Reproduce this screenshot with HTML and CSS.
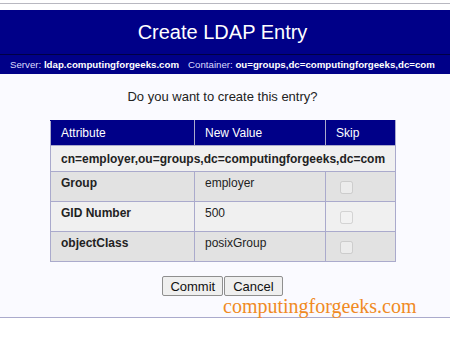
FILE: index.html
```html
<!DOCTYPE html>
<html>
<head>
<meta charset="utf-8">
<link rel="stylesheet" href="styles.css">
</head>
<body>
<div class="topline"></div>
<div class="page">
  <div class="title">Create LDAP Entry</div>
  <div class="subtitle">
    <span>Server: <b>ldap.computingforgeeks.com</b></span>
    <span>Container: <b>ou=groups,dc=computingforgeeks,dc=com</b></span>
  </div>
  <div class="content">
    <p class="question">Do you want to create this entry?</p>
    <table class="entry">
      <colgroup><col class="c1"><col class="c2"><col class="c3"></colgroup>
      <thead>
        <tr><th>Attribute</th><th>New Value</th><th>Skip</th></tr>
      </thead>
      <tbody>
        <tr class="dn"><td colspan="3">cn=employer,ou=groups,dc=computingforgeeks,dc=com</td></tr>
        <tr class="even"><td class="attr">Group</td><td>employer</td><td><input type="checkbox" disabled></td></tr>
        <tr class="odd"><td class="attr">GID Number</td><td>500</td><td><input type="checkbox" disabled></td></tr>
        <tr class="even"><td class="attr">objectClass</td><td>posixGroup</td><td><input type="checkbox" disabled></td></tr>
      </tbody>
    </table>
    <div class="buttons">
      <button>Commit</button><button>Cancel</button>
    </div>
    <div class="watermark">computingforgeeks.com</div>
  </div>
</div>
</body>
</html>
```

FILE: styles.css
```css
html, body {
  margin: 0;
  padding: 0;
  background: #ffffff;
}
body {
  font-family: "Liberation Sans", Arial, sans-serif;
  color: #222;
  padding-top: 3px;
}
.topline {
  height: 1px;
  background: #b8b8c0;
  margin-bottom: 6px;
}
.page {
  width: 450px;
}
.title {
  background: #000088;
  color: #ffffff;
  font-size: 20px;
  height: 44px;
  line-height: 44px;
  text-align: center;
  padding-right: 5px;
  border-bottom: 1px solid #000044;
}
.subtitle {
  background: #000088;
  color: #dcdcff;
  font-size: 9.7px;
  height: 19px;
  display: flex;
  align-items: center;
  gap: 9px;
  padding-left: 10px;
  white-space: nowrap;
}
.subtitle span { flex: none; }
.subtitle b {
  color: #ffffff;
}
.content {
  background: #fafaff;
  border-bottom: 1px solid #aaaacc;
  width: 450px;
  padding-top: 1px;
  height: 242px;
}
.question {
  width: 445px;
  text-align: center;
  font-size: 13px;
  margin: 14px 0 0 0;
  line-height: 15px;
}
.entry {
  border-collapse: collapse;
  margin: 16px 0 0 50px;
  width: 346px;
  font-size: 12px;
  border: 1px solid #aaaacc;
}
.entry .c1 { width: 144px; }
.entry .c2 { width: 131px; }
.entry th {
  background: #000088;
  color: #ffffff;
  font-weight: normal;
  text-align: left;
  height: 24px;
  padding: 0 10px;
  border: 1px solid #aaaacc;
  border-top: 1px solid #000088;
}
.entry td {
  border: 1px solid #aaaacc;
  padding: 4px 10px 0 10px;
  vertical-align: top;
  height: 25px;
}
.entry tr.dn td {
  background: #f0f0f0;
  font-weight: bold;
  height: 25px;
  padding: 0 10px;
  vertical-align: middle;
  white-space: nowrap;
}
.entry tr.even td { background: #e2e2e2; }
.entry tr.odd td { background: #f0f0f0; }
.entry td.attr { font-weight: bold; }
.entry input[type="checkbox"] {
  margin: 5px 0 0 4px;
  width: 13px;
  height: 13px;
  opacity: 0.8;
}
.buttons {
  width: 445px;
  display: flex;
  justify-content: center;
  margin-top: 14px;
}
.buttons button {
  font-family: "Liberation Sans", Arial, sans-serif;
  font-size: 13px;
  height: 20px;
  padding: 0 7px;
  margin: 0;
  color: #111;
  background: #efefef;
  border: 1px solid #8f8f8f;
  border-radius: 2px;
}
.buttons button + button { margin-left: 1px; padding: 0 8px; }
.watermark {
  font-family: "Liberation Serif", "Times New Roman", serif;
  color: #f08a24;
  font-size: 20px;
  line-height: 20px;
  margin: 0 0 0 223px;
}
```
